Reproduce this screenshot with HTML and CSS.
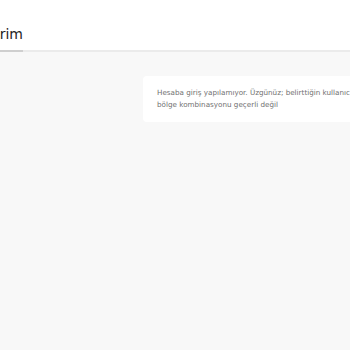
FILE: index.html
```html
<!DOCTYPE html>
<html lang="tr">
<head>
<meta charset="utf-8">
<link rel="stylesheet" href="styles.css">
</head>
<body>
<header class="header">
  <nav class="tabs">
    <span class="tab active">Bilgilerim</span>
  </nav>
</header>
<main class="content">
  <div class="alert">
    <p class="alert-text">Hesaba giriş yapılamıyor. Üzgünüz; belirttiğin kullanıcı adı, şifre ve<br>bölge kombinasyonu geçerli değil</p>
  </div>
</main>
</body>
</html>
```
FILE: styles.css
```css
* { box-sizing: border-box; }
html, body { margin: 0; padding: 0; }
body {
  width: 350px;
  height: 350px;
  overflow: hidden;
  background: #f8f8f8;
  font-family: "DejaVu Sans", Inter, sans-serif;
}
.header {
  background: #ffffff;
  height: 52px;
  border-bottom: 2px solid #ebebeb;
  display: flex;
  align-items: flex-end;
}
.tabs {
  display: flex;
  margin-left: -43px;
  margin-bottom: -2px;
}
.tab {
  font-size: 14px;
  font-weight: 400;
  color: #1e1e1e;
  padding-bottom: 8px;
  border-bottom: 2px solid #cfcfcf;
  white-space: nowrap;
}
.content {
  padding: 24px 0 0 143px;
}
.alert {
  background: #ffffff;
  border-radius: 4px;
  width: 320px;
  padding: 11px 14px;
}
.alert-text {
  margin: 0;
  font-size: 7.2px;
  line-height: 12px;
  color: #707070;
  white-space: nowrap;
}
```
